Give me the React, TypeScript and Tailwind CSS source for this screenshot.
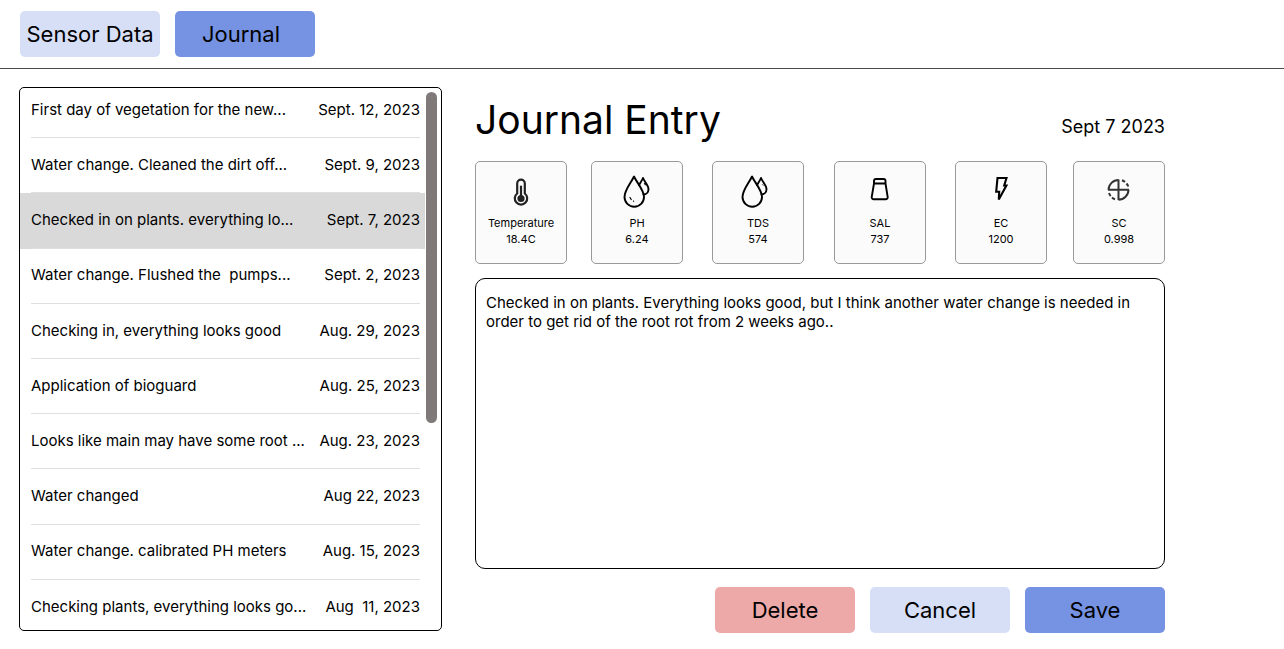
import type { ReactNode } from "react";

type Entry = { text: string; date: string; selected?: boolean };

const entries: Entry[] = [
  { text: "First day of vegetation for the new...", date: "Sept. 12, 2023" },
  { text: "Water change. Cleaned the dirt off...", date: "Sept. 9, 2023" },
  { text: "Checked in on plants. everything lo...", date: "Sept. 7, 2023", selected: true },
  { text: "Water change. Flushed the  pumps...", date: "Sept. 2, 2023" },
  { text: "Checking in, everything looks good", date: "Aug. 29, 2023" },
  { text: "Application of bioguard", date: "Aug. 25, 2023" },
  { text: "Looks like main may have some root ...", date: "Aug. 23, 2023" },
  { text: "Water changed", date: "Aug 22, 2023" },
  { text: "Water change. calibrated PH meters", date: "Aug. 15, 2023" },
  { text: "Checking plants, everything looks go...", date: "Aug  11, 2023" },
];

function Icon({ children }: { children: ReactNode }) {
  return (
    <svg width="40" height="40" viewBox="0 0 40 40" fill="none" stroke="#000" strokeWidth="1.9" strokeLinejoin="round" strokeLinecap="round" aria-hidden="true">
      {children}
    </svg>
  );
}

function Thermometer() {
  return (
    <Icon>
      <path d="M16.200 22V12a3.800 3.800 0 0 1 7.600 0v10a6.200 6.200 0 1 1-7.600 0z" transform="translate(0 -.5)" stroke="#222" strokeWidth="2.200" />
      <path d="M20 14.500v12" stroke="#222" strokeWidth="2.200" />
      <circle cx="20" cy="26.500" r="3.600" fill="#222" stroke="none" />
    </Icon>
  );
}

function Drops({ speckled = false }: { speckled?: boolean }) {
  return (
    <Icon>
      <g transform={speckled ? "translate(-.5 -.5)" : "translate(-3.500 -.5)"}>
        <path d="M17.500 5C14.500 11.500 8 18.500 8 25.500a9.700 9.700 0 0 0 19.500 0C27.500 18.500 20.500 11.500 17.500 5z" />
        <path d="M22.500 13.500C24 11 25.500 9 26.500 6.500c1.500 4 5.500 7 5.500 11.200a5.300 5.300 0 0 1-5 5.300" />
        {speckled ? (
          <path d="M13.500 26l1.200 2M17 29.700h.1M28 12l.8 1.300" strokeWidth="1.200" />
        ) : (
          <path d="M28 13.200l.5.500" strokeWidth="1" />
        )}
      </g>
    </Icon>
  );
}

function Shaker() {
  return (
    <Icon>
      <path d="M16 7h7.500a2 2 0 0 1 2 2v2.500H14V9a2 2 0 0 1 2-2z M14 11.500l-2.300 13.600a2 2 0 0 0 2 2.200h12a2 2 0 0 0 2-2.200L25.500 11.500" />
    </Icon>
  );
}

function Bolt() {
  return (
    <Icon>
      <path d="M16.500 6h9l-2.300 7.500h2.200L17.800 27.500l.4-7.800h-3z" strokeLinejoin="miter" strokeMiterlimit="2" strokeWidth="2.100" />
    </Icon>
  );
}

function Conductance() {
  return (
    <Icon>
      <g transform="translate(-.5 -1.500)">
        <path d="M20 9V29.500M9.500 19.300h21M10 19.300A10 10 0 0 1 20 9.500M30 19.300A10 10 0 0 1 20 29.200M23.500 9.800a10 10 0 0 1 3 1.800M28 13a10 10 0 0 1 1.800 3M10.500 22.500a10 10 0 0 0 1.700 3M13.500 27a10 10 0 0 0 3 1.800" stroke="#333" strokeWidth="2" strokeLinecap="butt" />
      </g>
    </Icon>
  );
}

const readings = [
  { label: "Temperature", value: "18.4C", icon: <Thermometer /> },
  { label: "PH", value: "6.24", icon: <Drops speckled /> },
  { label: "TDS", value: "574", icon: <Drops /> },
  { label: "SAL", value: "737", icon: <Shaker /> },
  { label: "EC", value: "1200", icon: <Bolt /> },
  { label: "SC", value: "0.998", icon: <Conductance /> },
];

const button = "h-[46px] w-[140px] shrink-0 whitespace-nowrap rounded-[5px] text-[22px]";

export default function App() {
  return (
    <div className="bg-white font-['Inter',sans-serif] text-black">
      <header className="border-b border-[#4a4a4a] pt-[11px] pb-[11px] pl-5">
        <nav className="flex gap-[15px]">
          <button type="button" className={`${button} bg-[#d7dff6]`}>Sensor Data</button>
          <button type="button" className={`${button} bg-[#7692e2] pr-2`}>Journal</button>
        </nav>
      </header>
      <main className="flex items-start gap-[33px] pt-[18px] pr-[119px] pb-[14px] pl-[19px]">
        <section aria-label="Journal entries" className="relative w-[423px] shrink-0 overflow-hidden rounded-[5px] border border-black">
          <ul className="-mt-[5px] mr-4 -mb-[5px] grid h-[552px] auto-rows-fr">
            {entries.map((entry) => (
              <li key={entry.date} className={entry.selected ? "bg-[#d9d9d9] pr-[5px] pl-[11px]" : "pr-[5px] pl-[11px]"}>
                <button type="button" className="flex h-full w-full items-center justify-between border-b border-[#dfdfdf] text-left text-[15px] whitespace-pre">
                  <span>{entry.text}</span>
                  <span>{entry.date}</span>
                </button>
              </li>
            ))}
          </ul>
          <div className="absolute top-1 right-1 h-[331px] w-[11px] rounded-full bg-[#7f7979]" />
        </section>

        <section className="min-w-0 flex-1">
          <div className="flex items-end justify-between pt-2">
            <h1 className="text-[39px] leading-[50px]">Journal Entry</h1>
            <p className="pb-[6px] text-lg leading-6">Sept 7 2023</p>
          </div>
          <div className="mt-4 grid grid-cols-[116fr_121fr_122fr_121fr_118fr_92px]">
            {readings.map((r) => (
              <div key={r.label} className="flex h-[103px] w-[92px] flex-col items-center rounded-[5px] border border-[#999] bg-[#fbfbfb] pt-[10px] text-[11px] leading-4">
                {r.icon}
                <span className="mt-[3px]">{r.label}</span>
                <span>{r.value}</span>
              </div>
            ))}
          </div>
          <textarea
            aria-label="Journal entry text"
            className="mt-[14px] block h-[291px] w-full resize-none rounded-[10px] border border-black bg-white px-[10px] py-[14px] text-[15px] leading-[19px] outline-none"
            defaultValue="Checked in on plants. Everything looks good, but I think another water change is needed in order to get rid of the root rot from 2 weeks ago.."
          />
          <div className="mt-[18px] flex justify-end gap-[15px]">
            <button type="button" className={`${button} bg-[#eda9a7]`}>Delete</button>
            <button type="button" className={`${button} bg-[#d7dff6]`}>Cancel</button>
            <button type="button" className={`${button} bg-[#7692e2]`}>Save</button>
          </div>
        </section>
      </main>
    </div>
  );
}
